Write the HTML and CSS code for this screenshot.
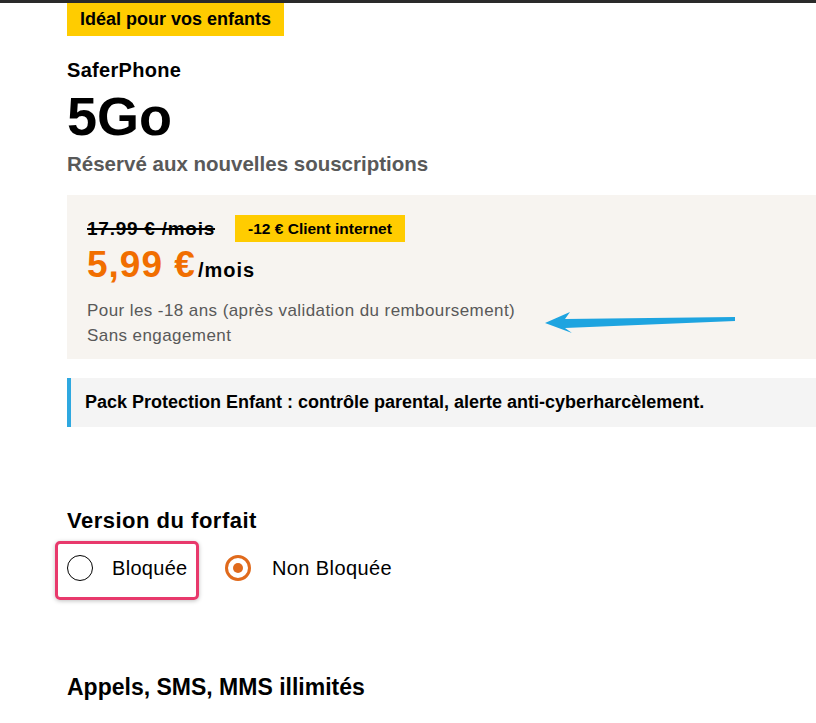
FILE: index.html
```html
<!DOCTYPE html>
<html lang="fr">
<head>
<meta charset="utf-8">
<link rel="stylesheet" href="styles.css">
</head>
<body>
<div class="topline"></div>
<main class="page">
  <div class="badge">Idéal pour vos enfants</div>
  <div class="brand">SaferPhone</div>
  <h1 class="data">5Go</h1>
  <div class="reserved">Réservé aux nouvelles souscriptions</div>

  <section class="pricebox">
    <div class="oldrow">
      <span class="oldprice">17.99 € /mois</span>
      <span class="promo">-12 € Client internet</span>
    </div>
    <div class="newprice"><span class="amount">5,99 €</span><span class="permonth">/mois</span></div>
    <div class="notes">
      <div class="note">Pour les -18 ans (après validation du remboursement)</div>
      <div class="note">Sans engagement</div>
    </div>
    <svg class="arrow" width="195" height="30" viewBox="0 0 195 30">
      <path d="M0 15 L25 4 L20 11 L190 9 L190 13 L20 20 L27 25 Z" fill="#1ea4e0"/>
    </svg>
  </section>

  <section class="pack">Pack Protection Enfant : contrôle parental, alerte anti-cyberharcèlement.</section>

  <h2 class="section-title version">Version du forfait</h2>
  <div class="radios">
    <label class="option highlighted"><span class="radio"></span><span class="optlabel">Bloquée</span></label>
    <label class="option"><span class="radio checked"></span><span class="optlabel">Non Bloquée</span></label>
  </div>

  <h2 class="section-title appels">Appels, SMS, MMS illimités</h2>
</main>
</body>
</html>
```

FILE: styles.css
```css
* { box-sizing: border-box; }
html, body { margin: 0; padding: 0; background: #fff; }
body {
  font-family: "Liberation Sans", Arial, sans-serif;
  color: #000;
  overflow: hidden;
  height: 723px;
}
.topline { height: 3px; background: #2a2a2a; }
.page { padding-left: 67px; }
.badge {
  display: inline-block;
  background: #ffcc00;
  font-weight: bold;
  font-size: 18px;
  height: 33px;
  line-height: 33px;
  padding: 0 13px;
}
.brand { font-weight: bold; font-size: 20px; line-height: 24px; margin-top: 22px; letter-spacing: 0.3px; }
.data { font-size: 54px; font-weight: bold; margin: 6px 0 0; line-height: 56px; }
.reserved { font-weight: bold; font-size: 20.5px; color: #595959; margin-top: 8px; line-height: 24px; }

.pricebox {
  position: relative;
  background: #f7f4f0;
  margin-top: 19px;
  height: 164px;
  padding: 20px 20px 0 20px;
}
.oldrow { display: flex; align-items: center; gap: 20px; height: 27px; }
.oldprice { font-size: 19px; font-weight: bold; letter-spacing: 0.75px; text-decoration: line-through; text-decoration-thickness: 2px; }
.promo { background: #ffcc00; font-weight: bold; font-size: 15.5px; height: 27px; line-height: 27px; padding: 0 13px; }
.newprice { margin-top: 2px; font-size: 37px; line-height: 42px; height: 42px; }
.amount { color: #f16e00; font-weight: bold; letter-spacing: 1px; }
.permonth { font-weight: bold; font-size: 20px; letter-spacing: 1px; margin-left: 2px; }
.notes { margin-top: 12px; }
.note { font-size: 17px; color: #595959; line-height: 25px; letter-spacing: 0.42px; }
.arrow { position: absolute; left: 478px; top: 113px; }

.pack {
  margin-top: 19px;
  background: #f4f4f4;
  border-left: 4px solid #2ea8e0;
  height: 49px;
  line-height: 49px;
  padding-left: 14px;
  font-weight: bold;
  font-size: 18px;
}

.section-title { font-weight: bold; margin: 0; }
.version { margin-top: 81px; font-size: 22px; line-height: 26px; letter-spacing: 0.5px; }
.radios { display: flex; align-items: center; margin-top: 7px; margin-left: -12px; }
.option { display: flex; align-items: center; height: 59px; padding: 0 10px 5px 9px; border: 3px solid transparent; border-radius: 5px; }
.option.highlighted { border-color: #e8396c; box-shadow: 0 1px 4px rgba(0,0,0,0.25); width: 144px; }
.option + .option { margin-left: 26px; padding-left: 0; border: 0; }
.radio { width: 26px; height: 26px; border-radius: 50%; border: 1px solid #000; background: #fff; flex: none; }
.radio.checked { border: 3px solid #e06a1c; position: relative; }
.radio.checked::after { content: ""; position: absolute; left: 5px; top: 5px; width: 10px; height: 10px; border-radius: 50%; background: #e06a1c; }
.optlabel { font-size: 20px; margin-left: 19px; letter-spacing: 0.3px; }
.option + .option .optlabel { margin-left: 21px; letter-spacing: 0.4px; }
.appels { margin-top: 73px; font-size: 23px; line-height: 28px; }
```
